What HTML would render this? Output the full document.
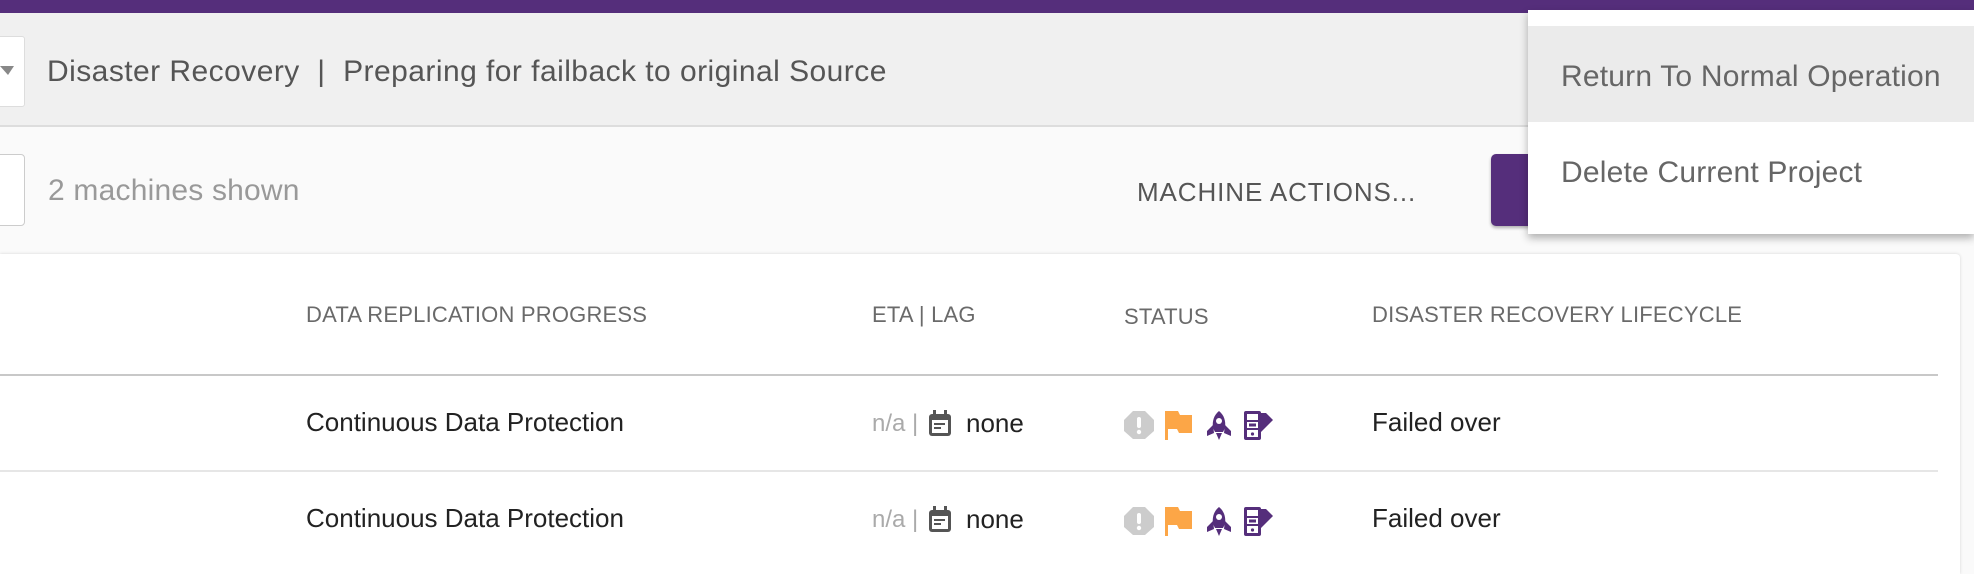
<!DOCTYPE html>
<html><head><meta charset="utf-8"><style>
*{margin:0;padding:0;box-sizing:border-box}
body{width:1974px;height:560px;overflow:hidden;background:#fafafa;font-family:"Liberation Sans",sans-serif;position:relative}
.a{position:absolute;white-space:nowrap}
.top{left:0;top:0;width:1974px;height:13px;background:#552e7b}
.hdr{left:0;top:13px;width:1974px;height:114px;background:#f0f0f0;border-bottom:2px solid #ddd}
.card{left:0;top:254px;width:1960px;height:320px;background:#fff;box-shadow:0 0 3px rgba(0,0,0,.15);border-radius:0 4px 0 0}
.th{font-size:22px;color:#6a6a6a;top:302px;letter-spacing:0.2px}
.td{font-size:26px;color:#222}
.menu{left:1528px;top:10px;width:446px;height:224px;background:#fff;box-shadow:0 4px 8px rgba(0,0,0,.3)}
.mi{font-size:30px;color:#666;left:33px;letter-spacing:0.2px}
</style></head><body>
<div class="a top"></div>
<div class="a hdr"></div>
<div class="a" style="left:-6px;top:36px;width:31px;height:71px;background:#fff;border:1px solid #ddd;border-radius:3px"></div>
<div class="a" style="left:0;top:66px;width:0;height:0;border-left:8px solid transparent;border-right:6px solid transparent;border-top:9px solid #888"></div>
<div class="a" style="left:47px;top:55px;font-size:30px;color:#555;letter-spacing:0.45px">Disaster Recovery&nbsp; |&nbsp; Preparing for failback to original Source</div>
<div class="a" style="left:-6px;top:154px;width:31px;height:72px;background:#fff;border:1px solid #ccc;border-radius:4px"></div>
<div class="a" style="left:48px;top:174px;font-size:30px;color:#999;letter-spacing:0.2px">2 machines shown</div>
<div class="a" style="left:1137px;top:177px;font-size:26px;color:#555;letter-spacing:0.9px">MACHINE ACTIONS...</div>
<div class="a" style="left:1491px;top:154px;width:100px;height:72px;background:#552e7b;border-radius:5px;box-shadow:0 2px 3px rgba(0,0,0,.3)"></div>
<div class="a card"></div>
<div class="a th" style="left:306px">DATA REPLICATION PROGRESS</div>
<div class="a th" style="left:872px">ETA | LAG</div>
<div class="a th" style="left:1124px;top:304px">STATUS</div>
<div class="a th" style="left:1372px">DISASTER RECOVERY LIFECYCLE</div>
<div class="a" style="left:0;top:374px;width:1938px;height:2px;background:#c8c8c8"></div>
<div class="a" style="left:0;top:470px;width:1938px;height:2px;background:#e6e6e6"></div>

<div class="a td" style="left:306px;top:407px">Continuous Data Protection</div>
<div class="a td" style="left:872px;top:410px;color:#aaa;font-size:24px">n/a |</div>
<svg class="a" style="left:928px;top:410px" width="24" height="27" viewBox="0 0 24 27"><rect x="1" y="4" width="22" height="22" rx="3" fill="#555"/><rect x="4" y="10" width="16" height="13" fill="#fff"/><rect x="6" y="13" width="11" height="2" fill="#555"/><rect x="6" y="17" width="7" height="2" fill="#555"/><rect x="5" y="0" width="3" height="6" fill="#555"/><rect x="16" y="0" width="3" height="6" fill="#555"/></svg>
<div class="a td" style="left:966px;top:408px">none</div>
<div class="a td" style="left:1372px;top:407px">Failed over</div>

<div class="a td" style="left:306px;top:503px">Continuous Data Protection</div>
<div class="a td" style="left:872px;top:506px;color:#aaa;font-size:24px">n/a |</div>
<svg class="a" style="left:928px;top:506px" width="24" height="27" viewBox="0 0 24 27"><rect x="1" y="4" width="22" height="22" rx="3" fill="#555"/><rect x="4" y="10" width="16" height="13" fill="#fff"/><rect x="6" y="13" width="11" height="2" fill="#555"/><rect x="6" y="17" width="7" height="2" fill="#555"/><rect x="5" y="0" width="3" height="6" fill="#555"/><rect x="16" y="0" width="3" height="6" fill="#555"/></svg>
<div class="a td" style="left:966px;top:504px">none</div>
<div class="a td" style="left:1372px;top:503px">Failed over</div>

<svg class="a" style="left:1124px;top:409px" width="150" height="32" viewBox="0 0 150 32">
<g id="ic">
<polygon points="9,2 21,2 30,11 30,22 21,30 9,30 0,22 0,11" fill="#ccc"/><rect x="13" y="8" width="4" height="11" rx="2" fill="#fff"/><circle cx="15" cy="23" r="2.2" fill="#fff"/>
<rect x="41" y="2" width="3" height="29" fill="#fca647"/><path d="M44 2h10l2 4h12v18H55l-2-4h-9z" fill="#fca647"/>
<path d="M95 2c5 4 7 10 6 17l-2 4h-8l-2-4c-1-7 1-13 6-17z" fill="#552e7b"/><circle cx="95" cy="12" r="3" fill="#fff"/><path d="M89 16l-6 6v5l7-3zM101 16l6 6v5l-7-3z" fill="#552e7b"/><path d="M92 24h6l-3 7z" fill="#552e7b"/>
<rect x="120" y="2" width="17" height="29" rx="2" fill="#552e7b"/><rect x="123" y="5" width="11" height="6" fill="#fff"/><rect x="123" y="13" width="11" height="6" fill="#fff"/><rect x="123" y="21" width="11" height="7" fill="#fff"/><circle cx="128.5" cy="25" r="1.6" fill="#552e7b"/><rect x="125" y="14.5" width="7" height="3" fill="#552e7b"/><path d="M137 4h5l7 7-12 12z" fill="#552e7b"/>
</g></svg>
<svg class="a" style="left:1124px;top:505px" width="150" height="32" viewBox="0 0 150 32"><use href="#ic"/></svg>

<div class="a menu">
<div class="a" style="left:0;top:16px;width:446px;height:96px;background:#ebebeb"></div>
<div class="a mi" style="top:50px">Return To Normal Operation</div>
<div class="a mi" style="top:146px">Delete Current Project</div>
</div>
</body></html>
